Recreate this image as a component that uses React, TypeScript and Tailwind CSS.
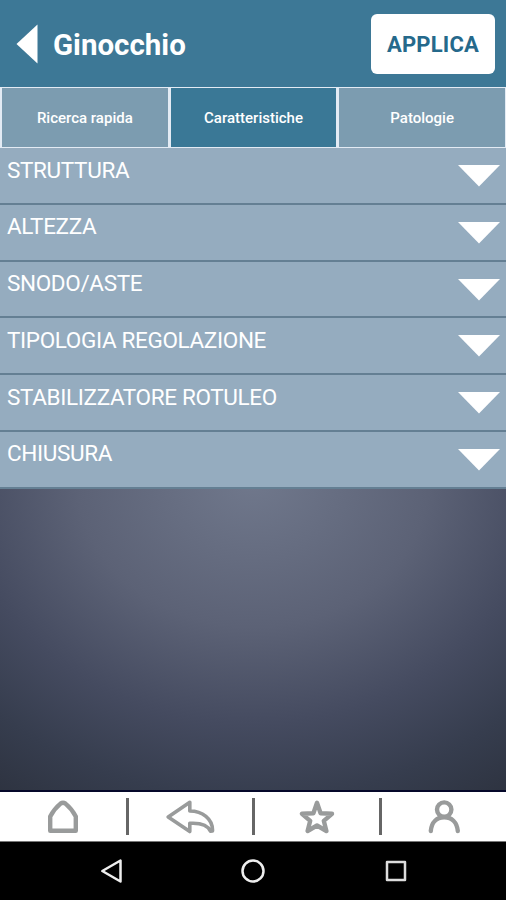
import { useState } from 'react';

const tabs = ['Ricerca rapida', 'Caratteristiche', 'Patologie'];

const sections = [
  'STRUTTURA',
  'ALTEZZA',
  'SNODO/ASTE',
  'TIPOLOGIA REGOLAZIONE',
  'STABILIZZATORE ROTULEO',
  'CHIUSURA',
];

const HomeIcon = () => (
  <svg className="w-[50px] h-[34px]" viewBox="0 0 50 34" fill="none" stroke="#999b9b" strokeWidth="4.400" strokeLinejoin="round">
    <path d="M12.200 30.800V16.500Q16 9 22.500 3.600Q25 1.800 27.500 3.600Q34 9 37.800 16.500V30.800Z" />
  </svg>
);

const BackArrowIcon = () => (
  <svg className="ml-1 w-[50px] h-[34px]" viewBox="0 0 50 34" fill="none" stroke="#999b9b" strokeWidth="3.6" strokeLinejoin="round">
    <path d="M2.200 17L23.800 2.300V11C36 11 47 18.500 46.500 31L44.500 31.200C42 25.500 34 22.700 23.800 23.300V31.600Z" />
  </svg>
);

const StarIcon = () => (
  <svg className="ml-[2px] w-[50px] h-[34px]" viewBox="0 0 50 34" fill="none" stroke="#999b9b" strokeWidth="4.400" strokeLinejoin="round">
    <path d="M25 2.800L28.600 13.300L40 13.800L31.800 20.800L34.400 31L25 25.500L15.600 31L18.200 20.800L10 13.800L21.400 13.300Z" />
  </svg>
);

const UserIcon = () => (
  <svg className="ml-[2px] w-[50px] h-[34px]" viewBox="0 0 50 34" fill="none" stroke="#999b9b" strokeWidth="4.400" strokeLinecap="round">
    <circle cx="25.200" cy="9.600" r="7.200" />
    <path d="M11.800 31C12.500 22 18 17.200 25.200 17.200S38 22 38.800 31" />
  </svg>
);

const navItems = [HomeIcon, BackArrowIcon, StarIcon, UserIcon];

const App = () => {
  const [activeTab, setActiveTab] = useState(1);

  return (
    <div className="flex h-[900px] w-[506px] flex-col overflow-hidden bg-black font-['Roboto',sans-serif] text-white">
      {/* Header */}
      <header className="flex h-[87px] shrink-0 items-center bg-[#3d7896] pl-4 pr-[11px]">
        <svg className="h-10 w-[22px]" viewBox="0 0 22 40" fill="#fff">
          <path d="M0.500 20L21.500 0.500V39.500Z" />
        </svg>
        <h1 className="ml-[15px] grow pt-[5px] text-[29.500px] font-bold leading-none">Ginocchio</h1>
        <button className="h-[60px] w-[124px] rounded-md bg-white pt-[2px] text-[22px] font-bold tracking-[0.200px] text-[#25698b]">
          APPLICA
        </button>
      </header>

      {/* Tabs */}
      <div className="grid h-[61px] shrink-0 grid-cols-3 gap-[3px] bg-[#e3ebf4] pl-[2px] pr-px pb-[1px] pt-[1px]">
        {tabs.map((tab, i) => (
          <button
            key={tab}
            onClick={() => setActiveTab(i)}
            className={`pt-[2px] text-[15px] font-medium ${i === activeTab ? 'bg-[#3a7896]' : 'bg-[#7c9cb0]'}`}
          >
            {tab}
          </button>
        ))}
      </div>

      {/* Filter sections */}
      <ul className="shrink-0">
        {sections.map((section) => (
          <li
            key={section}
            className="flex h-[56.750px] justify-between border-b-2 border-[#647f93] bg-[#95acbf] pl-[7px] pr-[6px]"
          >
            <span className="pt-[8.500px] text-[22.500px] leading-[27px] tracking-[-0.350px]">{section}</span>
            <svg className="mt-[16px] h-[23px] w-[42px]" viewBox="0 0 42 23" fill="#fff">
              <path d="M0 1H42L21 22.500Z" />
            </svg>
          </li>
        ))}
      </ul>

      <div className="grow border-b-2 border-[#05082a] bg-[radial-gradient(ellipse_440px_370px_at_50%_-10px,#70788c_0%,#5c6276_40%,#454b60_66%,#363d4e_86%,#2b303c_108%)]" />

      {/* Bottom navigation */}
      <nav className="flex h-[50px] shrink-0 items-center border-b border-[#777] bg-white">
        {navItems.map((Icon, i) => (
          <div key={i} className="flex h-full flex-1 items-center">
            <div className="flex grow justify-center">
              <Icon />
            </div>
            {i < navItems.length - 1 && <span className="-mr-[2px] h-[37px] w-[3px] bg-[#666]" />}
          </div>
        ))}
      </nav>

      {/* System bar */}
      <div className="flex h-[58px] shrink-0 items-center justify-between bg-black pl-[100px] pr-[99px]">
        <svg className="h-[26px] w-6" viewBox="0 0 24 26" fill="none" stroke="#eee" strokeWidth="2.500" strokeLinejoin="round">
          <path d="M2.300 13L20.500 2.500V23.500Z" />
        </svg>
        <svg className="mr-[3px] h-[26px] w-[26px]" viewBox="0 0 26 26" fill="none" stroke="#eee" strokeWidth="2.500">
          <circle cx="13" cy="13" r="10.500" />
        </svg>
        <svg className="h-[22px] w-[22px]" viewBox="0 0 22 22" fill="none" stroke="#ddd" strokeWidth="2.500" strokeLinejoin="round">
          <rect x="2" y="2" width="18" height="18" />
        </svg>
      </div>
    </div>
  );
};

export default App;
